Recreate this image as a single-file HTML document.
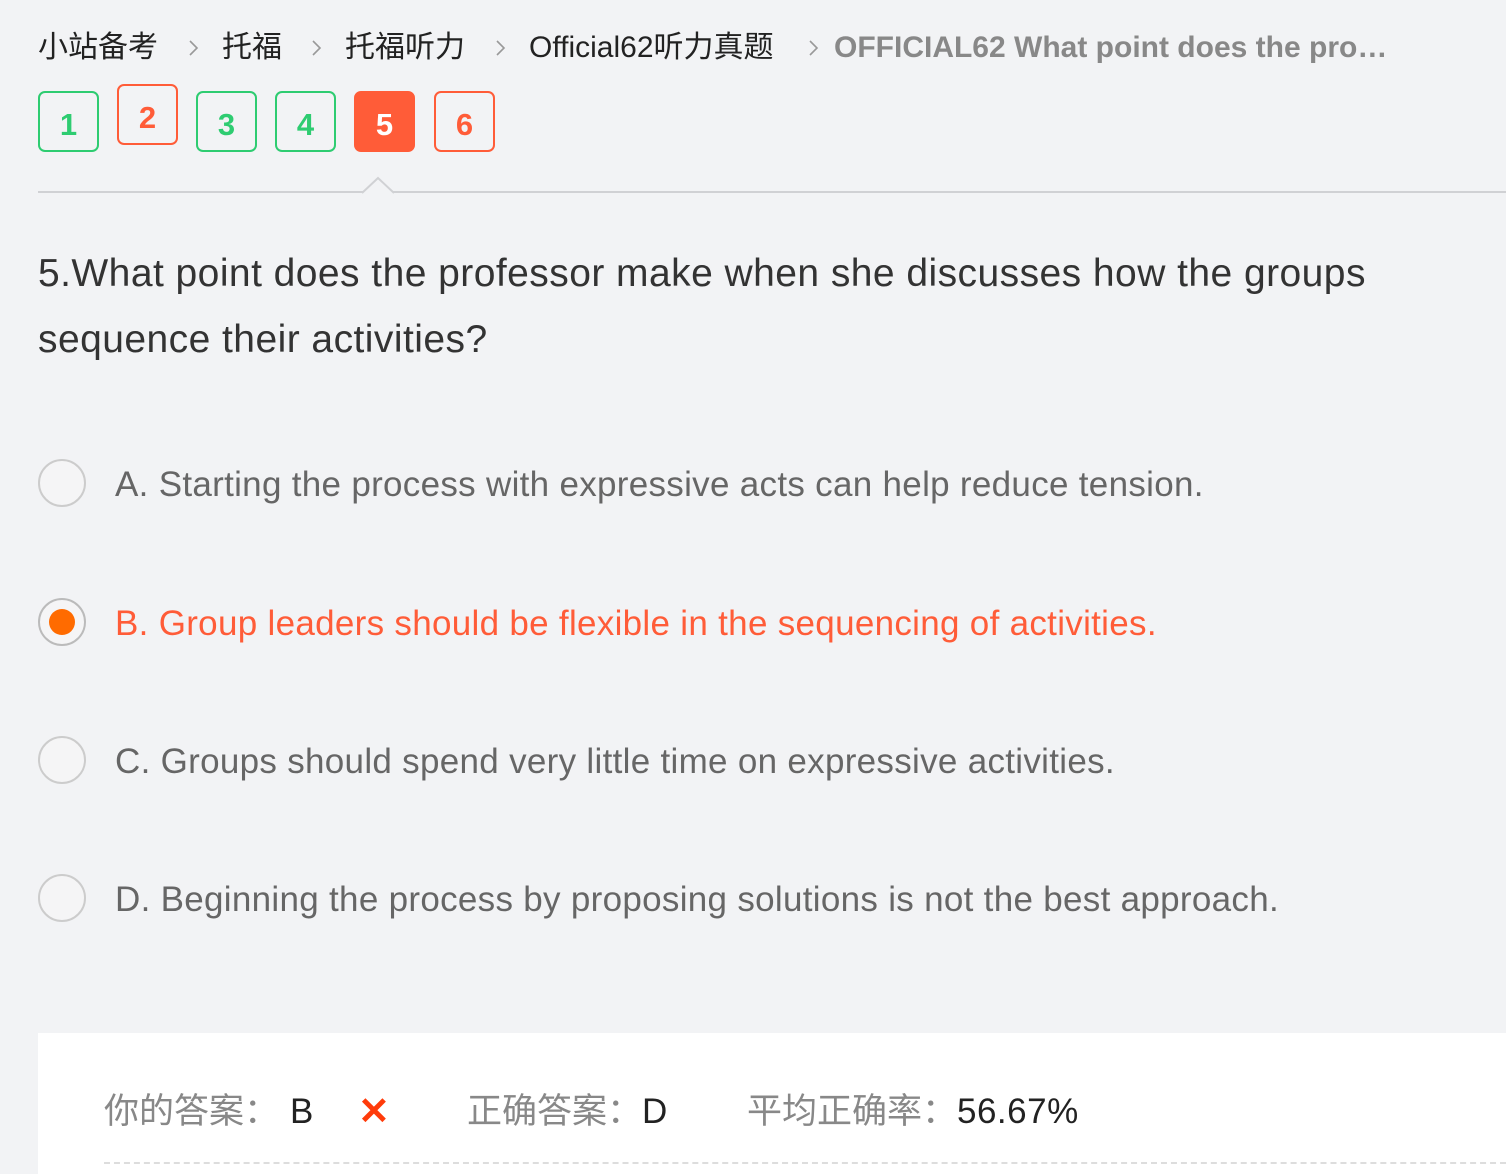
<!DOCTYPE html>
<html><head><meta charset="utf-8"><style>
*{margin:0;padding:0;box-sizing:border-box}
body{width:1506px;height:1174px;overflow:hidden;background:#f2f3f5;font-family:"Liberation Sans","Noto Sans CJK SC",sans-serif;position:relative}
.bc{position:absolute;top:27px;font-size:30px;color:#222;white-space:nowrap;line-height:42px}
.chev{position:absolute;top:39px}
.last{color:#888;font-weight:bold;font-size:30px;letter-spacing:0px}
.box{position:absolute;width:61px;height:61px;border:2px solid #2ecc71;border-radius:7px;color:#2ecc71;font-weight:bold;font-size:31px;text-align:center;line-height:63px}
.r{border-color:#ff5c38;color:#ff5c38}
.f{background:#ff5c38;color:#fff;border-color:#ff5c38}
.line{position:absolute;left:38px;right:0;top:191px;height:2px;background:#d0d1d4}
.q{position:absolute;left:38px;top:241px;width:1420px;font-size:39px;letter-spacing:0.45px;line-height:66px;color:#333}
.opt{position:absolute;left:38px;font-size:35px;letter-spacing:0.3px;color:#666;line-height:48px;white-space:nowrap}
.opt .c{position:absolute;left:0;top:0;width:48px;height:48px;border:2px solid #ccc;border-radius:50%;background:#f5f5f6}
.opt span.t{margin-left:77px;position:relative;top:2px}
.sel{color:#ff5c38}
.sel .c{border-color:#bbb}
.sel .c:after{content:"";position:absolute;left:9px;top:9px;width:26px;height:26px;border-radius:50%;background:#ff6b00}
.panel{position:absolute;left:38px;top:1033px;right:0;bottom:0;background:#fff}
.a{position:absolute;top:1089px;font-size:35px;color:#888;white-space:nowrap;line-height:46px}
.a.k{color:#222}
.dash{position:absolute;left:104px;right:0;top:1162px;border-top:2px dashed #ddd}
</style></head><body>
<div class="bc" style="left:38px">小站备考</div>
<svg class="chev" style="left:188px" width="12" height="18"><path d="M2 2 L9 9 L2 16" fill="none" stroke="#999" stroke-width="1.6"/></svg>
<div class="bc" style="left:222px">托福</div>
<svg class="chev" style="left:311px" width="12" height="18"><path d="M2 2 L9 9 L2 16" fill="none" stroke="#999" stroke-width="1.6"/></svg>
<div class="bc" style="left:345px">托福听力</div>
<svg class="chev" style="left:495px" width="12" height="18"><path d="M2 2 L9 9 L2 16" fill="none" stroke="#999" stroke-width="1.6"/></svg>
<div class="bc" style="left:529px">Official62听力真题</div>
<svg class="chev" style="left:808px" width="12" height="18"><path d="M2 2 L9 9 L2 16" fill="none" stroke="#999" stroke-width="1.6"/></svg>
<div class="bc last" style="left:834px">OFFICIAL62 What point does the pro…</div>
<div class="box" style="left:38px;top:91px">1</div>
<div class="box r" style="left:117px;top:84px">2</div>
<div class="box" style="left:196px;top:91px">3</div>
<div class="box" style="left:275px;top:91px">4</div>
<div class="box f" style="left:354px;top:91px">5</div>
<div class="box r" style="left:434px;top:91px">6</div>
<div class="line"></div>
<svg style="position:absolute;left:362px;top:176px" width="32" height="18"><path d="M0 17 L16 2 L32 17" fill="#f2f3f5" stroke="#d0d1d4" stroke-width="2"/></svg>
<div class="q">5.What point does the professor make when she discusses how the groups<br>sequence their activities?</div>
<div class="opt" style="top:459px"><i class="c"></i><span class="t">A. Starting the process with expressive acts can help reduce tension.</span></div>
<div class="opt sel" style="top:598px"><i class="c"></i><span class="t">B. Group leaders should be flexible in the sequencing of activities.</span></div>
<div class="opt" style="top:736px"><i class="c"></i><span class="t">C. Groups should spend very little time on expressive activities.</span></div>
<div class="opt" style="top:874px"><i class="c"></i><span class="t">D. Beginning the process by proposing solutions is not the best approach.</span></div>
<div class="panel"></div>
<div class="a" style="left:104px">你的答案：</div>
<div class="a k" style="left:290px">B</div>
<div class="a" style="left:358px;color:#ff3b0a;font-weight:bold;font-size:38px">✕</div>
<div class="a" style="left:467px">正确答案：</div>
<div class="a k" style="left:642px">D</div>
<div class="a" style="left:747px">平均正确率：</div>
<div class="a k" style="left:957px;letter-spacing:0.5px">56.67%</div>
<div class="dash"></div>
</body></html>
